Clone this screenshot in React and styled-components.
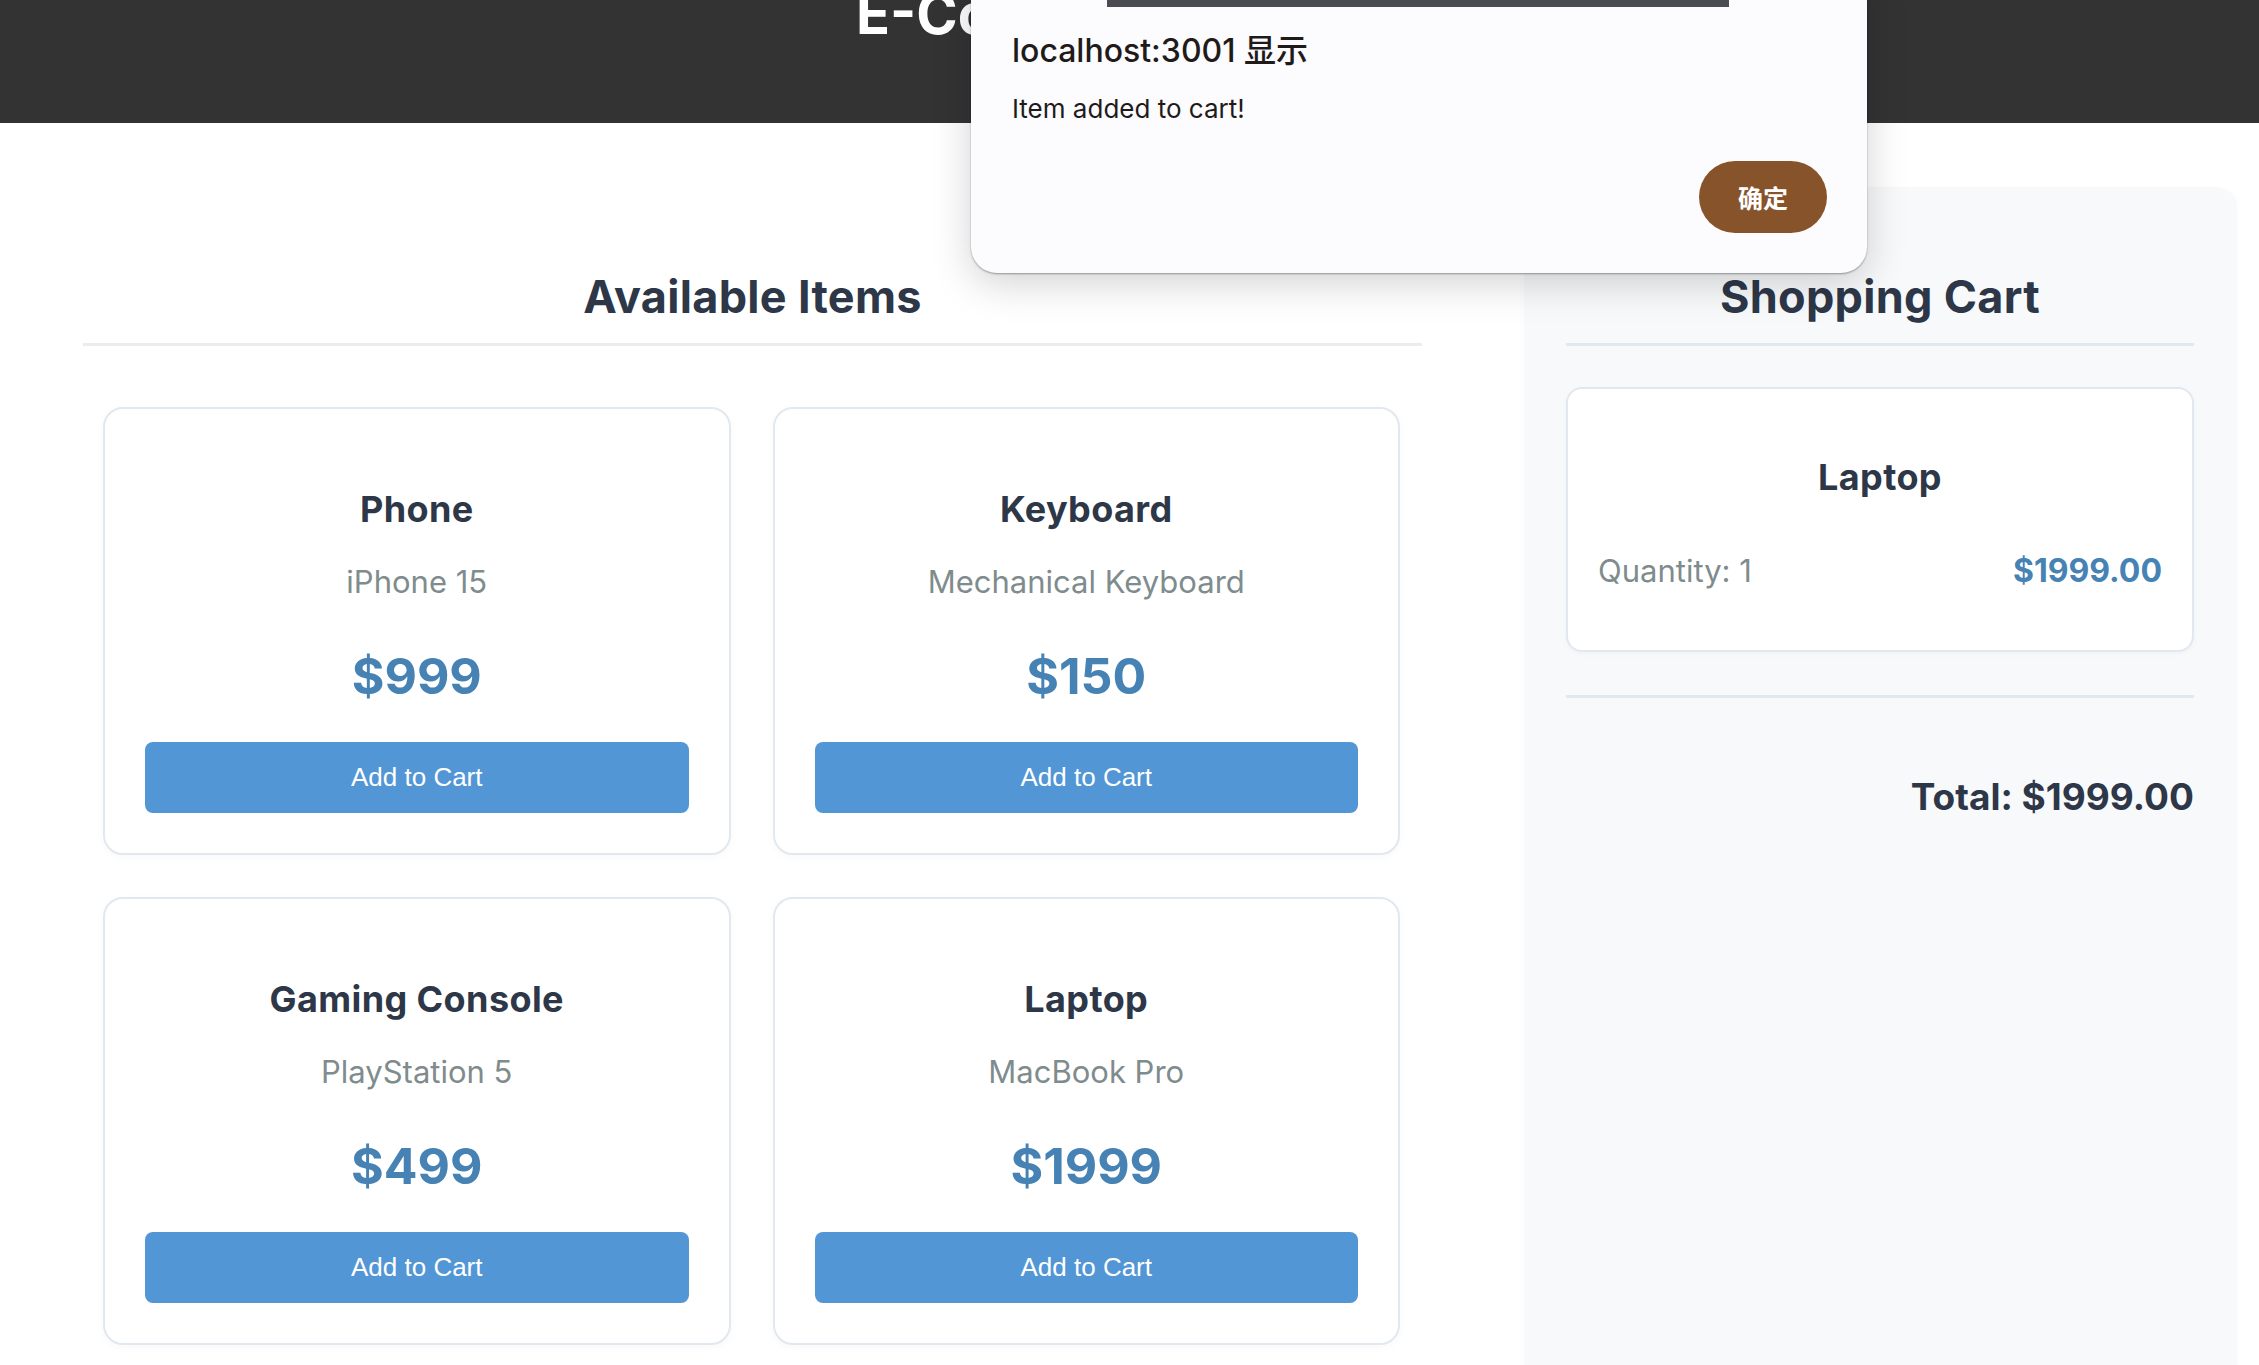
import React from "react";
import styled, { createGlobalStyle } from "styled-components";

const Global = createGlobalStyle`
  html, body { margin: 0; padding: 0; overflow: hidden; background: #ffffff; }
  * { box-sizing: border-box; }
`;

const Page = styled.div`
  position: relative;
  font-family: Inter, "Noto Sans", sans-serif;
  color: #2d3748;
  min-height: 1365px;
`;

const Header = styled.header`
  background: #333333;
  height: 123px;
  overflow: hidden;
  display: flex;
  justify-content: center;
  padding-left: 58px;
`;

const SiteTitle = styled.h1`
  margin: -19px 0 0;
  font-size: 56px;
  line-height: 66px;
  font-weight: 700;
  color: #ffffff;
`;

const Main = styled.main`
  display: grid;
  grid-template-columns: 1339px 713px;
  column-gap: 102px;
  padding: 64px 0 0 83px;
  align-items: start;
`;

const Section = styled.section`
  padding-top: 83px;
`;

const SectionTitle = styled.h2`
  margin: 0;
  font-size: 45px;
  line-height: 53px;
  font-weight: 700;
  letter-spacing: 0.3px;
  text-align: center;
  color: #2d3748;
  padding-bottom: 20px;
  border-bottom: 3px solid ${(p) => p.$line};
`;

const ProductGrid = styled.div`
  display: grid;
  grid-template-columns: repeat(2, 1fr);
  gap: 42px;
  margin-top: 61px;
  padding: 0 22px 0 20px;
`;

const Card = styled.div`
  background: #ffffff;
  border: 2px solid #e2e8f0;
  border-radius: 20px;
  padding: 40px;
  display: flex;
  flex-direction: column;
  text-align: center;
  box-shadow: 0 2px 8px rgba(0, 0, 0, 0.03);
`;

const ItemName = styled.h3`
  margin: ${(p) => p.$top}px 0 0;
  font-size: 36px;
  line-height: 41px;
  font-weight: 700;
  letter-spacing: 0.4px;
  color: #2d3748;
  text-align: center;
`;

const Desc = styled.p`
  margin: 33px 0 0;
  font-size: 31px;
  line-height: 37px;
  font-weight: 400;
  color: #7f8c8d;
`;

const Price = styled.p`
  margin: 46px 0 0;
  font-size: 50px;
  line-height: 60px;
  font-weight: 700;
  color: #4682b4;
`;

const AddButton = styled.button`
  margin-top: 36px;
  height: 71px;
  border: none;
  border-radius: 8px;
  background: #5296d5;
  color: #ffffff;
  font-family: "Liberation Sans", Arial, sans-serif;
  font-size: 26px;
  cursor: pointer;
`;

const Sidebar = styled.aside`
  background: #f7f9fb;
  border-radius: 20px;
  padding: 83px 43px 0 42px;
  min-height: 1300px;
  box-shadow: 0 2px 10px rgba(0, 0, 0, 0.02);
`;

const CartList = styled.div`
  margin-top: 41px;
`;

const CartCard = styled.div`
  background: #ffffff;
  border: 2px solid #e2e8f0;
  border-radius: 16px;
  padding: 30px;
  box-shadow: 0 2px 6px rgba(0, 0, 0, 0.03);
`;

const CartRow = styled.div`
  display: flex;
  justify-content: space-between;
  align-items: baseline;
  margin: 54px 0 31px;
  line-height: 37px;
`;

const Quantity = styled.span`
  font-size: 31px;
  color: #7f8c8d;
  font-weight: 400;
`;

const LinePrice = styled.span`
  font-size: 32px;
  color: #4682b4;
  font-weight: 700;
`;

const CartFooter = styled.div`
  margin-top: 43px;
  border-top: 3px solid #e2e8f0;
  padding-top: 77px;
  text-align: right;
`;

const Total = styled.p`
  margin: 0;
  font-size: 37px;
  line-height: 44px;
  font-weight: 700;
  color: #2d3748;
`;

const Dialog = styled.div`
  position: absolute;
  left: 971px;
  top: -40px;
  width: 896px;
  height: 313px;
  background: #fcfbfd;
  border-radius: 26px;
  box-shadow: 0 1px 2px rgba(0, 0, 0, 0.35), 0 10px 40px rgba(0, 0, 0, 0.18);
  padding: 73px 40px 40px 41px;
  display: flex;
  flex-direction: column;
  font-family: Inter, "Noto Sans CJK SC", sans-serif;
  color: #1f1b1b;
`;

const DialogStrip = styled.div`
  position: absolute;
  left: 136px;
  top: 40px;
  width: 622px;
  height: 7px;
  background: #4b4b52;
`;

const DialogTitle = styled.div`
  font-size: 32px;
  line-height: 36px;
  font-weight: 500;
`;

const DialogMessage = styled.div`
  margin-top: 25px;
  font-size: 26px;
  line-height: 30px;
  font-weight: 400;
`;

const OkButton = styled.button`
  margin-top: auto;
  align-self: flex-end;
  width: 128px;
  height: 72px;
  border: none;
  border-radius: 36px;
  background: #87532a;
  color: #ffffff;
  font-family: "Noto Sans CJK SC", sans-serif;
  font-size: 25px;
  font-weight: 700;
`;

const products = [
  { name: "Phone", desc: "iPhone 15", price: 999 },
  { name: "Keyboard", desc: "Mechanical Keyboard", price: 150 },
  { name: "Gaming Console", desc: "PlayStation 5", price: 499 },
  { name: "Laptop", desc: "MacBook Pro", price: 1999 },
];

const cart = [{ name: "Laptop", qty: 1, price: 1999 }];

export default function App() {
  const total = cart.reduce((s, c) => s + c.qty * c.price, 0);
  return (
    <Page>
      <Global />
      <Header>
        <SiteTitle>E-Commerce Platform</SiteTitle>
      </Header>
      <Main>
        <Section>
          <SectionTitle $line="#ececec">Available Items</SectionTitle>
          <ProductGrid>
            {products.map((p) => (
              <Card key={p.name}>
                <ItemName $top={40}>{p.name}</ItemName>
                <Desc>{p.desc}</Desc>
                <Price>${p.price}</Price>
                <AddButton>Add to Cart</AddButton>
              </Card>
            ))}
          </ProductGrid>
        </Section>
        <Sidebar>
          <SectionTitle $line="#e2e8f0">Shopping Cart</SectionTitle>
          <CartList>
            {cart.map((c) => (
              <CartCard key={c.name}>
                <ItemName $top={38}>{c.name}</ItemName>
                <CartRow>
                  <Quantity>Quantity: {c.qty}</Quantity>
                  <LinePrice>${(c.qty * c.price).toFixed(2)}</LinePrice>
                </CartRow>
              </CartCard>
            ))}
          </CartList>
          <CartFooter>
            <Total>Total: ${total.toFixed(2)}</Total>
          </CartFooter>
        </Sidebar>
      </Main>
      <Dialog>
        <DialogStrip />
        <DialogTitle>localhost:3001 显示</DialogTitle>
        <DialogMessage>Item added to cart!</DialogMessage>
        <OkButton>确定</OkButton>
      </Dialog>
    </Page>
  );
}
